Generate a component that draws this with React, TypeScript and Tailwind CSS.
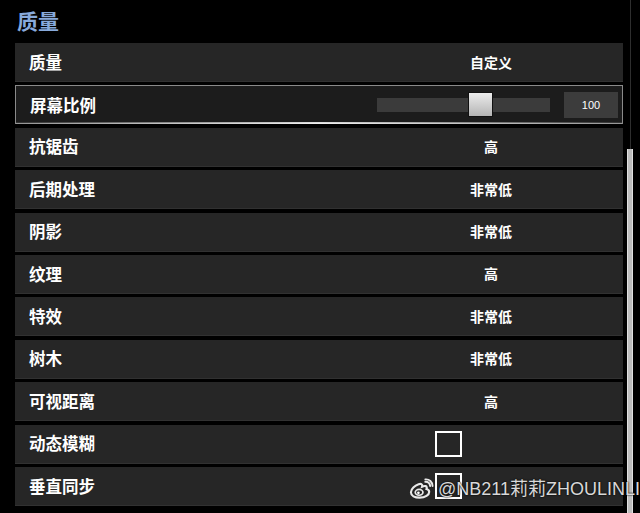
import React from "react";

type Row =
  | { kind: "value"; label: string; value: string }
  | { kind: "slider"; label: string; value: number }
  | { kind: "check"; label: string };

const ROWS: Row[] = [
  { kind: "value", label: "质量", value: "自定义" },
  { kind: "slider", label: "屏幕比例", value: 100 },
  { kind: "value", label: "抗锯齿", value: "高" },
  { kind: "value", label: "后期处理", value: "非常低" },
  { kind: "value", label: "阴影", value: "非常低" },
  { kind: "value", label: "纹理", value: "高" },
  { kind: "value", label: "特效", value: "非常低" },
  { kind: "value", label: "树木", value: "非常低" },
  { kind: "value", label: "可视距离", value: "高" },
  { kind: "check", label: "动态模糊" },
  { kind: "check", label: "垂直同步" },
];

const CJK = { fontFamily: '"Noto Sans CJK SC", "Noto Sans", sans-serif' };

function WeiboLogo() {
  return (
    <svg viewBox="0 0 26 22" width="25" height="22" aria-hidden>
      <g fill="none" stroke="#fff" strokeOpacity="0.9">
        <path
          d="M10 6c-4 1.5-8 5-8 8.5C2 18 6 20 11 20c6 0 10-3 10-6 0-1.8-1.6-2.6-2.8-3 .6-1.4.4-2.7-1-3-1.4-.3-3.6.6-3.6.6s.6-2-.6-2.6C12 5.4 11 5.7 10 6z"
          strokeWidth="2.2"
          fill="#222"
          fillOpacity="0.5"
        />
        <ellipse cx="10.5" cy="14.5" rx="4" ry="3" strokeWidth="1.8" />
        <path d="M17 3.5c2.5-.3 5 1.5 5 4.5" strokeWidth="2" strokeLinecap="round" />
        <path d="M17 1c4-.4 7.5 2.5 7.5 7" strokeWidth="2" strokeLinecap="round" />
      </g>
      <circle cx="9.8" cy="15" r="1.4" fill="#fff" />
    </svg>
  );
}

function SettingRow({ row }: { row: Row }) {
  const selected = row.kind === "slider";
  return (
    <div
      className={`relative flex h-[39px] items-center pl-[14px] ${
        selected ? "border border-[#8a8a8a] bg-[#1c1c1c]" : "border-b border-[#313131] bg-[#262626]"
      }`}
    >
      {row.kind === "value" && (
        <>
          <span className="w-[386px] text-[16.5px] font-bold text-white">{row.label}</span>
          <span className="w-[152px] text-center text-[14px] font-bold text-white">{row.value}</span>
        </>
      )}
      {row.kind === "slider" && (
        <>
          <span className="w-[347px] text-[16.5px] font-bold text-white">{row.label}</span>
          <div className="relative h-[14px] w-[173px] bg-[#3b3b3b]">
            <div className="absolute left-[91px] top-[-6px] h-[25px] w-[25px] border border-[#111] bg-[linear-gradient(#ececec,#b4b4b4)]" />
          </div>
          <div className="ml-[14px] flex h-[26px] w-[54px] items-center justify-center bg-[#3c3c3c] font-['Liberation_Sans',sans-serif] text-[11px] text-white">
            {row.value}
          </div>
          <div className="absolute bottom-[-1px] left-0 right-0 h-[2px] bg-[linear-gradient(90deg,rgba(255,255,255,0.1),rgba(255,255,255,0.85)_50%,rgba(255,255,255,0.1))]" />
        </>
      )}
      {row.kind === "check" && (
        <>
          <span className="w-[406px] text-[16.5px] font-bold text-white">{row.label}</span>
          <div className="h-[26px] w-[27px] border-2 border-white" />
        </>
      )}
    </div>
  );
}

export default function App() {
  return (
    <div className="relative h-[513px] w-[640px] overflow-hidden bg-black" style={CJK}>
      <div className="flex">
        <div className="ml-[15px] w-[608px]">
          <div className="flex h-[43px] items-center pb-[1px] pl-[2px] text-[21px] font-bold text-[#88aadc]">
            质量
          </div>
          <div className="flex flex-col gap-[3.4px]">
            {ROWS.map((r) => (
              <SettingRow key={r.label} row={r} />
            ))}
          </div>
        </div>
        <div className="ml-[4px] flex h-[513px] w-[6px] flex-col">
          <div className="mx-auto h-[149px] w-[1px] bg-[#2e2e2e]" />
          <div className="flex-1 border-x border-[#e0e0e0] bg-[#bdbdbd]" />
        </div>
      </div>
      <div className="absolute left-[409px] top-[478px] flex items-center gap-[4px]">
        <WeiboLogo />
        <span className="font-['Liberation_Sans',_'Noto_Sans_CJK_SC',sans-serif] text-[18px] leading-none text-white/85 [text-shadow:0_0_2px_#000,0_0_1px_#000]">
          @NB211莉莉ZHOULINLI
        </span>
      </div>
    </div>
  );
}
